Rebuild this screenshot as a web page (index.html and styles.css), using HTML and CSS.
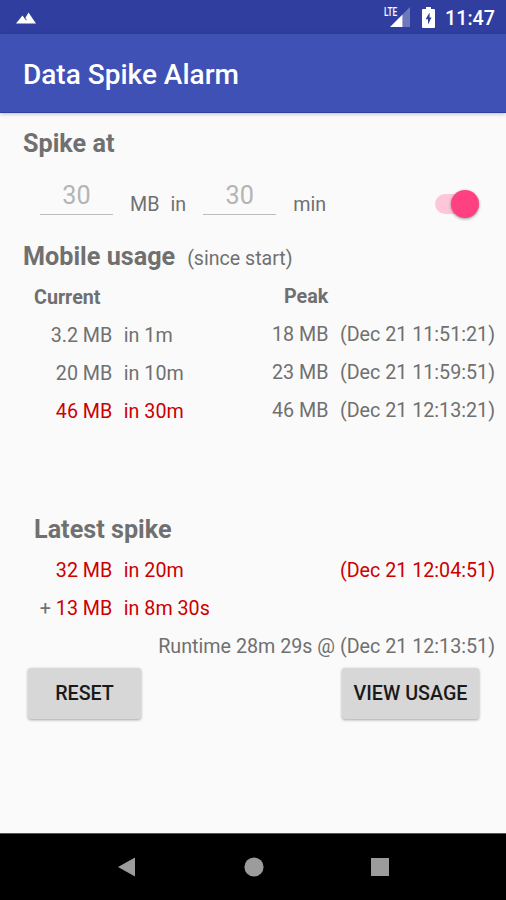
FILE: index.html
```
<!DOCTYPE html>
<html lang="en">

<head>
    <meta charset="UTF-8">
    <meta name="viewport" content="width=device-width, initial-scale=1.0">
    <title>Data Spike Alarm</title>
    <link rel="stylesheet" href="styles.css">
</head>

<body>
    <div class="status-bar">
        <svg class="icon-notify" width="20" height="12" viewBox="0 0 20 12">
            <path d="M0 11.5 L6.5 3.5 L9 6.5 L12.5 0.5 L20 11.5 Z" fill="#fff"/>
            <path d="M7.8 4.6 L10.4 8.2" stroke="#303f9f" stroke-width="1"/>
        </svg>
        <div class="status-right">
            <div class="signal">
                <span class="lte">LTE</span>
                <svg width="20" height="20" viewBox="0 0 20 20">
                    <path d="M20 0 V20 H12.5 V7.5 Z" fill="#fff" fill-opacity="0.3"/>
                    <path d="M12.5 7.5 V20 H0 Z" fill="#fff"/>
                </svg>
            </div>
            <svg class="battery" width="13" height="21" viewBox="0 0 13 21">
                <path d="M4 0 H9 V2 H12 Q13 2 13 3 V20 Q13 21 12 21 H1 Q0 21 0 20 V3 Q0 2 1 2 H4 Z" fill="#fff"/>
                <path d="M7.6 5.5 L3.6 12.2 H6 V17.5 L9.6 10.6 H7.6 Z" fill="#303f9f"/>
            </svg>
            <span class="clock">11:47</span>
        </div>
    </div>

    <header class="app-bar">
        <h1>Data Spike Alarm</h1>
    </header>

    <main class="content">
        <h2>Spike at</h2>

        <div class="spike-form">
            <span class="field">30</span>
            <span class="unit unit-mb">MB</span>
            <span class="unit unit-in">in</span>
            <span class="field">30</span>
            <span class="unit unit-min">min</span>
            <span class="switch"><span class="thumb"></span></span>
        </div>

        <div class="usage-title">
            <h2>Mobile usage</h2>
            <span>(since start)</span>
        </div>

        <div class="usage">
            <div class="current">
                <h3>Current</h3>
                <div class="row"><span class="amount">3.2 MB</span><span>in 1m</span></div>
                <div class="row"><span class="amount">20 MB</span><span>in 10m</span></div>
                <div class="row alert"><span class="amount">46 MB</span><span>in 30m</span></div>
            </div>
            <div class="peak">
                <h3>Peak</h3>
                <div class="row"><span>18 MB</span><span>(Dec 21 11:51:21)</span></div>
                <div class="row"><span>23 MB</span><span>(Dec 21 11:59:51)</span></div>
                <div class="row"><span>46 MB</span><span>(Dec 21 12:13:21)</span></div>
            </div>
        </div>

        <div class="latest">
            <h2>Latest spike</h2>
            <div class="row alert">
                <span class="amount">32 MB</span><span>in 20m</span>
                <span class="time">(Dec 21 12:04:51)</span>
            </div>
            <div class="row alert">
                <span class="amount"><span class="plus">+</span> 13 MB</span><span>in 8m 30s</span>
            </div>
            <div class="row">
                <span class="time">Runtime 28m 29s @ (Dec 21 12:13:51)</span>
            </div>
        </div>

        <div class="buttons">
            <button class="btn btn-reset">RESET</button>
            <button class="btn btn-view">VIEW USAGE</button>
        </div>
    </main>

    <nav class="nav-bar">
        <svg width="20" height="20" viewBox="0 0 20 20"><path d="M1 10 L18 0.5 V19.5 Z"/></svg>
        <svg width="20" height="20" viewBox="0 0 20 20"><circle cx="10" cy="10" r="9.6"/></svg>
        <svg width="20" height="20" viewBox="0 0 20 20"><rect x="1" y="1" width="18" height="18"/></svg>
    </nav>
</body>

</html>
```
FILE: styles.css
```
:root {
    --primary: #3f51b5;
    --primary-dark: #303f9f;
    --accent: #ff4081;
    --background: #fafafa;
    --text: #707070;
    --alert: #cc0000;
}

* {
    box-sizing: border-box;
    margin: 0;
    padding: 0;
}

body {
    display: flex;
    flex-direction: column;
    height: 900px;
    font-family: Roboto, sans-serif;
    font-size: 19.7px;
    background: var(--background);
    color: var(--text);
    white-space: nowrap;
    overflow: hidden;
}

/* status bar */
.status-bar {
    display: flex;
    justify-content: space-between;
    height: 34px;
    padding: 0 11px 0 16px;
    background: var(--primary-dark);
    color: white;
}

.icon-notify {
    margin-top: 12px;
}

.status-right {
    display: flex;
    align-items: flex-start;
}

.signal {
    position: relative;
    height: 20px;
    margin: 7px 12px 0 0;
}

.signal svg {
    display: block;
}

.lte {
    position: absolute;
    left: -6px;
    top: -1px;
    font-size: 12.5px;
    line-height: 12px;
    font-weight: 500;
    transform: scaleX(0.66);
    transform-origin: left;
}

.battery {
    margin: 7px 10px 0 0;
}

.clock {
    font-size: 19.7px;
    font-weight: 500;
    line-height: 37px;
}

/* app bar */
.app-bar {
    display: flex;
    align-items: center;
    height: 79px;
    padding: 3px 23px 0;
    background: var(--primary);
    border-bottom: 1px solid var(--primary-dark);
    box-shadow: 0 1px 4px rgba(0, 0, 0, 0.25);
}

.app-bar h1 {
    color: white;
    font-size: 28px;
    font-weight: 500;
}

/* content */
.content {
    flex: 1;
    padding: 13px 11px 0 23px;
}

h2 {
    font-size: 25.2px;
    font-weight: 700;
    line-height: 36px;
}

h3 {
    font-size: 19.7px;
    font-weight: 700;
    line-height: 38px;
}

.spike-form {
    display: flex;
    align-items: flex-end;
    height: 53px;
    padding-left: 17px;
}

.field {
    width: 73px;
    height: 38px;
    border-bottom: 1.5px solid #bdbdbd;
    color: #b4b4b4;
    font-size: 25.2px;
    line-height: 38px;
    text-align: center;
}

.unit {
    line-height: 20px;
}

.unit-mb {
    margin-left: 17px;
}

.unit-in {
    margin: 0 17px 0 11px;
}

.unit-min {
    margin-left: 17px;
}

.switch {
    width: 44px;
    height: 20px;
    margin: 0 16px 1px auto;
    border-radius: 10px;
    background: #ffc6d9;
    position: relative;
}

.thumb {
    position: absolute;
    right: 0;
    top: -4px;
    width: 28px;
    height: 28px;
    border-radius: 50%;
    background: var(--accent);
    box-shadow: 0 1px 3px rgba(0, 0, 0, 0.4);
}

.usage-title {
    display: flex;
    align-items: baseline;
    gap: 12px;
    margin-top: 24px;
}

.usage-title span {
    font-size: 19.6px;
}

.usage {
    display: flex;
    justify-content: space-between;
    padding: 3px 0 0 11px;
}

.current {
    padding-top: 1px;
}

.peak h3 {
    padding-left: 12px;
}

.row {
    display: flex;
    height: 38px;
    gap: 11.5px;
    line-height: 38px;
}

.amount {
    width: 78.3px;
    text-align: right;
}

.time {
    margin-left: auto;
}

.alert {
    color: var(--alert);
}

.plus {
    color: var(--text);
}

.latest {
    margin-top: 81px;
    padding-left: 11px;
}

.latest h2 {
    height: 40px;
}

.buttons {
    display: flex;
    justify-content: space-between;
    margin-top: 2px;
    padding: 0 16px 0 5px;
}

.btn {
    height: 51px;
    border: none;
    border-radius: 3px;
    background: #d7d7d7;
    color: #1a1a1a;
    font: 500 19.7px Roboto, sans-serif;
    box-shadow: 0 1px 3px rgba(0, 0, 0, 0.35);
}

.btn-reset {
    width: 113px;
}

.btn-view {
    width: 137px;
}

/* navigation bar */
.nav-bar {
    display: flex;
    justify-content: center;
    align-items: center;
    gap: 106.5px;
    height: 67px;
    padding-left: 1px;
    border-top: 1px solid #555;
    background: black;
}

.nav-bar svg {
    fill: #9c9c9c;
}
```
